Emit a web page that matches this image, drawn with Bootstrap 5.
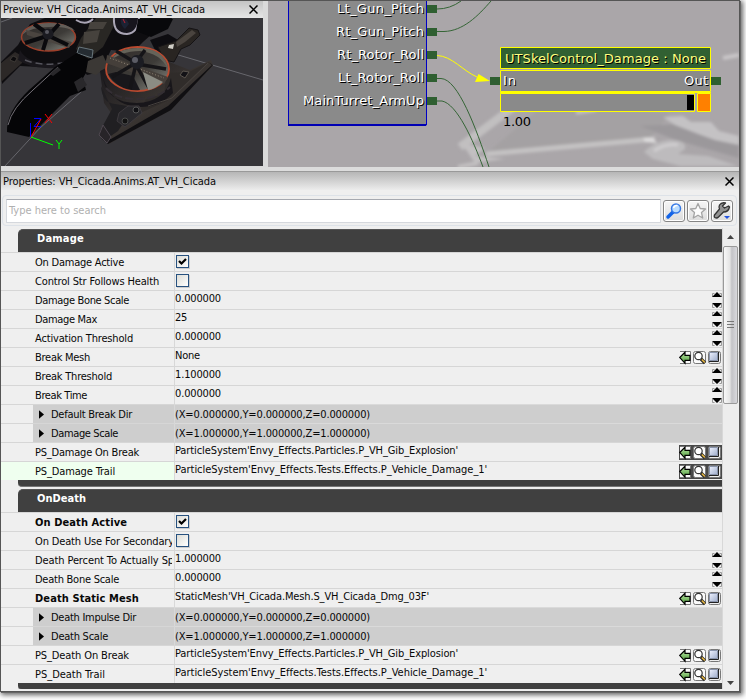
<!DOCTYPE html>
<html lang="en">
<head>
<meta charset="utf-8">
<title>AnimTree Editor</title>
<link href="https://cdn.jsdelivr.net/npm/bootstrap@5.3.0/dist/css/bootstrap.min.css" rel="stylesheet">
<script src="https://cdn.jsdelivr.net/npm/bootstrap@5.3.0/dist/js/bootstrap.bundle.min.js"></script>
<style>
body{background:#fff;font:11px/19px "DejaVu Sans Condensed","DejaVu Sans",sans-serif;color:#080808;overflow:hidden;height:700px}
.win{width:740px;height:692px;border:1px solid #555;background:#efefef;box-shadow:1px 1px 0 #666,2px 2px 5px 1px #666}
svg{display:block;flex:none}
.bar{height:17px;line-height:16px;background:linear-gradient(#c4c4c4,#e6e6e6);padding-left:2px}
.bar svg,.props-bar svg{margin-right:5px}
.upper{height:166px;background:#dadada}
.preview{width:262px;margin-right:5px}
.gap-strip{height:5px;background:#dcdcdc;border-bottom:1px solid #999}
.props-bar{height:18px;line-height:17px;background:linear-gradient(#b6b6b6,#ececec);padding-left:2px}
.searchbox{height:31px;margin:5px 2px 2px 1px;border:1px solid #dde2e8;border-radius:4px;padding:3px;gap:2px}
.searchbox .form-control{border-radius:1px;border:1px solid #d5d8dd;border-top-color:#a6a9b0;font-size:11px;line-height:18px;padding:2px 2px;height:24px;color:#b0b0b0;background:#fff;width:655px;flex:none}
.tool{width:22px;height:22px;border:1px solid #858585;border-radius:3px;background:linear-gradient(#f6f6f6,#dcdcdc);box-shadow:inset 0 0 0 1px #fff;margin-top:1px}
.list{width:721px;height:461px;padding-top:1px;overflow:hidden}
.cat{margin-left:17px;height:23px;background:#404040;color:#fff;font-weight:bold;border-radius:5px 0 0 0;padding-left:19px;line-height:18px;border-top:1px solid #555}
.foot{margin-left:17px;height:7px;background:#404040;border-radius:0 0 0 4px;border-bottom:1px solid #777;margin-bottom:2px}
.prop{height:19px}
.lab{width:174px;border-right:1px solid #d8d8d8;border-top:1px solid #d6d6d6;padding-left:34px;padding-top:1px;line-height:18px;white-space:nowrap;overflow:hidden;flex:none}
.lab .clip{display:block;width:137px;overflow:hidden}
.val{border-top:1px solid #d6d6d6;line-height:16px;white-space:nowrap}
.nested .lab{padding-left:32px;padding-top:0}
.nested .lab>div{background:#cecece;padding-left:6px;height:18px;gap:6px}
.nested .lab span{padding-top:1px}
.nested .val{background:#cecece;line-height:20px;border-color:#dadada}
.lab svg{margin-right:1px}
.focused .lab{background:#efffef}
.val>svg{margin-top:1px}
.val>svg[width="43"]{margin-top:2px}
.val>svg.inset-dark{background:#484848}
.chk{width:13px;height:13px;border:1px solid #27517f;background:linear-gradient(135deg,#dcdcd6,#fff);margin:2px 0 0 1px;box-shadow:1px 1px 0 #ccc}
.scroll{width:16px;background:#ededed;border-left:1px solid #d8d8d8;padding-top:7px}
.thumb{width:15px;height:158px;margin-top:7px;border:1px solid #999;border-radius:2px;background:linear-gradient(90deg,#f8f8f8,#e4e4e4 45%,#c3c3c7 60%,#d8d8dc);margin-bottom:277px}
.onpic{font-family:"DejaVu Sans",sans-serif;font-size:13px}
</style>
</head>
<body>
<svg width="0" height="0" class="position-absolute">
<defs>
<linearGradient id="gg" x1="0" y1="0" x2="0" y2="1"><stop offset="0" stop-color="#b9e6a4"/><stop offset="1" stop-color="#4d9a3a"/></linearGradient>
<linearGradient id="gb" x1="0" y1="0" x2="1" y2="1"><stop offset="0" stop-color="#eef2ff"/><stop offset="1" stop-color="#9fadcb"/></linearGradient>
<symbol id="spin" viewBox="0 0 10 17"><path d="M.5 5V1.500h2M9.500 5V1.500h-2M.5 12v3.500h2M9.500 12v3.500h-2" fill="none" stroke="#999"/><path d="M0 5L5 0l5 5zM0 11h10l-5 5z" fill="#000"/></symbol>
<symbol id="asset" viewBox="0 0 43 15">
<path d="M1 1.500h10.500v12H1" fill="#fafafa" stroke="#777"/><path d="M.7 7.500L6 2.300v3h5v5H6v3z" fill="url(#gg)" stroke="#000" stroke-width="1.200"/>
<rect x="14.500" y="1.500" width="12" height="12" rx="2" fill="#fafafa" stroke="#777"/><circle cx="19.500" cy="6" r="3.700" fill="#fff" stroke="#333" stroke-width="1.200"/><path d="M22 9l4 4" stroke="#222" stroke-width="3.200"/><path d="M22.800 9.500l3 3" stroke="#e8b840" stroke-width="1.600"/>
<rect x="29.500" y="1.500" width="12" height="12" rx="2" fill="#eee" stroke="#777"/><path d="M30.500 2.500h8v8h-8z" fill="url(#gb)" stroke="#8893ab"/><path d="M39.500 2v9.500H30" fill="none" stroke="#222"/></symbol>
<symbol id="tri" viewBox="0 0 6 10"><path d="M0 0l6 5-6 5z" fill="#000"/></symbol>
<symbol id="tick" viewBox="0 0 11 11"><path d="M2 5l2.500 2.500L9 3" fill="none" stroke="#000" stroke-width="2.200"/></symbol>
<symbol id="xx" viewBox="0 0 9 9"><path d="M.5.5l8 8M8.500.5l-8 8" stroke="#000" stroke-width="1.500"/></symbol>
</defs>
</svg>
<div class="win d-flex flex-column">
  <div class="upper d-flex flex-shrink-0">
    <section class="preview">
      <div class="bar d-flex justify-content-between align-items-center"><span data-w="202">Preview: VH_Cicada.Anims.AT_VH_Cicada</span><svg width="9" height="9"><use href="#xx"/></svg></div>
      <svg width="262" height="148" viewBox="1 18 262 148">
        <defs>
        <linearGradient id="hull" x1="0" y1="0" x2="1" y2="1"><stop offset="0" stop-color="#16151a"/><stop offset=".5" stop-color="#3a3532"/><stop offset="1" stop-color="#171519"/></linearGradient>
        <linearGradient id="duct" x1="0" y1="0" x2="1" y2="1"><stop offset="0" stop-color="#302b29"/><stop offset=".55" stop-color="#3d3b38"/><stop offset="1" stop-color="#8b8c84"/></linearGradient>
        </defs>
        <path fill="#363539" d="M1 18h262v148H1z"/>
        <path d="M1 22L12 18M175 54L263 80M5 166L40 128 82 91" stroke="#74747a" fill="none" stroke-width=".8"/>
        <path d="M1 62L18 45 30 24 45 18H172L169 26 152 34 143 42 133 52 111 50 100 72 87 75 74 60 60 68 20 66 2 84z" fill="#0e0d10"/>
        <path d="M1 63L15 52 24 57 22 63 1 82z" fill="#2c2827"/><path d="M10 60l3-4 4 2-2 4z" fill="#0c0b0d" stroke="#514b47" stroke-width=".6"/>
        <path d="M20 50q6 12 28 14t32-12l-2 11q-15 6-32 5-18-1-28-8z" fill="#19171c"/>
        <path d="M25 60q20 8 45 1" stroke="#55545c" fill="none" stroke-width="1.500" stroke-dasharray="7 4"/>
        <ellipse cx="48.500" cy="37" rx="27" ry="14" fill="url(#duct)" stroke="#9d3f2a" stroke-width="1.500"/>
        <path d="M22 35Q28 23 50 23q18 0 25 8-13-5-26-4-18 0-27 8z" fill="#615d58"/>
        <path d="M26 30l46 12-3 6-42-13z" fill="#4b4540"/><path d="M48 34L34 24M49 35l10-11M49 36l19 9M47 37l-4 13M47 36L25 43" stroke="#0a0a0d" stroke-width="4"/>
        <circle cx="48" cy="34" r="5.500" fill="#1a1a20"/><circle cx="47" cy="32" r="2" fill="#57575f"/>
        <path d="M81 38L96 18h22L103 47 88 59 76 49z" fill="#292724"/><path d="M84 32l16-2-3 12-14 2zM90 22h17l-4 7H88z" fill="#46423d"/><path d="M79 47l14 3-1 8-15-5z" fill="#252c32" stroke="#68757c"/>
        <path d="M76 20q10 6 17-1M114 18q-1 16 13 16 11-1 12-16" fill="#17151d" stroke="#aaa5b5" stroke-width="2"/>
        <path d="M121 19q5-2 8 5l-4 5q-5-4-4-10z" fill="#1c2233"/><path d="M123 19l2 4" stroke="#c21e31"/>
        <path d="M138 19h35l-5 10-17 8-15-6z" fill="#08080b"/>
        <path d="M77 53L93 61 83 78 86 90 70 96 29 137 7 132Q6 112 29 90L55 67z" fill="#050507"/>
        <path d="M8 125Q12 108 33 90L58 67" stroke="#747077" fill="none"/><path d="M50 74l8-7 3 3-8 6zM74 82l8-5 5 8-9 7z" fill="#29282b"/>
        <path d="M88 61l15-6 5 11-12 9-10-3z" fill="#3b3835"/>
        <path d="M150 40l18-6 10 6-8 14-14-2z" fill="#0d0c10"/>
        <path d="M158 47l18-6 13-13 9 2 2 5-10 10-9 4-7 13-10-2z" fill="#292522" stroke="#151315"/><path d="M176 42l16-12 4 3-11 9-8 5z" fill="#4a443f"/><path d="M169 45l5-1-1 5-5-1z" fill="#d0cec6"/>
        <path d="M100 71L110 66 169 62 190 70 211 60 213 66 171 110 109 144 99 135 111 113 104 103z" fill="url(#hull)"/>
        <path d="M208 62l4 3-44 41-57 33-11-5 2 5 6 5 63-34 42-45z" fill="#100f12"/><path d="M167 73l22-1 20-10-42 39-29 13 8-15 18-5z" fill="#302c2a"/>
        <path d="M101 86Q102 103 115 104l19 3-16 24-10 7-8-7 12-22z" fill="#201f22"/>
        <path d="M103 78q4 25 34 25 28-1 34-25l2 15q-14 15-36 14-25-2-34-29z" fill="#18161a"/>
        <path d="M106 88q10 11 31 11 20 0 33-12" stroke="#332e33" fill="none" stroke-width="2" stroke-dasharray="8 3"/>
        <ellipse cx="137.500" cy="69" rx="31.500" ry="22" fill="url(#duct)" stroke="#b94a30" stroke-width="1.800"/>
        <path d="M108 63Q117 48 138 48q27 0 30 21-8-16-28-18-20 0-32 12z" fill="#656359"/><path d="M108 74q11 18 32 16l-7-14-17-4z" fill="#18171b"/>
        <path d="M107 55l61 22-4 7-58-21z" fill="#453f3a"/><path d="M110 58l54 20" stroke="#8e8374" stroke-dasharray="1 2"/>
        <path d="M136 63L116 51M137 61l8-11M137 64l29 5M136 64l-6 25M136 65l13 23M134 64l-22 13" stroke="#151417" stroke-width="3.500"/>
        <path d="M143 72l20 10q-8 7-15 8z" fill="#8b8c84"/><circle cx="137" cy="62" r="7" fill="#1b1c22"/><circle cx="135" cy="60" r="3" fill="#5b5c65"/>
        <path d="M119 113l9-7h11l3 7-17 14-8-6z" fill="#29282c" stroke="#3d393d"/><circle cx="136" cy="110" r="3" fill="#101014" stroke="#555"/><circle cx="125" cy="121" r="3" fill="#111" stroke="#4a4a4a"/>
        <path d="M103 125l-4 10 8 8 4-6z" fill="#272428" stroke="#4f4850"/>
        <path d="M183 71l6 1-4 6-5-3z" fill="#131216" stroke="#5b554e"/><path d="M148 106l24-8 36-35" stroke="#46413e" fill="none"/>
        <path d="M30.500 137V123M34 118.500h7l-7 8h7" stroke="#0000ff" fill="none"/><path d="M31 137l10-18M45 114l7 9M52 114l-7 9" stroke="#f00" fill="none"/><path d="M31 137l22 8M56 140l3 4 3-4M59 144v5" stroke="#0f0" fill="none"/>
      </svg>
    </section>
    <svg width="471" height="166" viewBox="268 1 471 166" class="onpic">
      <defs><filter id="soft" x="-10%" y="-10%" width="120%" height="120%"><feGaussianBlur stdDeviation="1.500"/></filter></defs>
      <path fill="#aaa6a9" d="M268 1h471v166H268z"/>
      <g filter="url(#soft)">
        <path d="M486 154L540 108l60-4 70 10-20 24z" fill="#a4a1a3"/>
        <path d="M486 154L655 139" stroke="#c4c2c3" stroke-width="5"/><path d="M460 147l56-42" stroke="#c1bfc0" stroke-width="8"/>
        <path d="M460 143l25 5-10 8 30 3-30 4-8-12z" fill="#c2c0c1"/><path d="M458 167l20-4" stroke="#c2c0c1" stroke-width="4"/>
        <path d="M640 126l40-2 59 20v14l-63-18z" fill="#9b989b"/>
        <path d="M663 117l20-1 8 6 20 0 8 9 20 5v9l-24-5-14-5-26-10z" fill="#c4c2c4"/>
        <path d="M644 152q10-10 25-12 18 0 16 9l-7 5 30 2 30 10h-58l-27-7z" fill="#bdbbbd"/>
        <path d="M654 151q12-8 24-6" stroke="#d0ced0" stroke-width="3" fill="none"/>
        <path d="M643 138l10 0 4 5-12-1z" fill="#dddbdc"/><path d="M723 58l16-3" stroke="#c9c6c8" stroke-width="4"/><path d="M576 113l20-3" stroke="#c6c3c5" stroke-width="3"/>
      </g>
      <path d="M288.500 0V125H426.500V0" fill="#8a8a8a" stroke="#0000c4"/><path d="M288 125h138" stroke="#0000b4" stroke-width="2"/>
      <g fill="none" stroke="#356536">
        <path d="M437 9Q450 9 461 1M437 31.500h7C463 31 478 16 491 1M437 78.500h4C458 79 476 128 489 167M437 101h5C457 104 473 140 483 167"/>
        <path d="M437 55.500C452 56 463 71 477 77" stroke="#ff0"/>
      </g>
      <path d="M478.500 74L490 81 475 82z" fill="#ff0"/>
      <path fill="#2f5f31" d="M427 5h10v8h-10zM427 28h10v8h-10zM427 51h10v8h-10zM427 74h10v8h-10zM427 97h10v8h-10zM490 77h10v8h-10zM711 77h10v8h-10z"/>
      <g text-anchor="end" fill="#fff" style="text-shadow:1px 1px 0 #000">
        <text x="424" y="13" textLength="87">Lt_Gun_Pitch</text><text x="424" y="36" textLength="88">Rt_Gun_Pitch</text><text x="424" y="59" textLength="87">Rt_Rotor_Roll</text><text x="424" y="82" textLength="86">Lt_Rotor_Roll</text><text x="424" y="105" textLength="121">MainTurret_ArmUp</text>
      </g>
      <path d="M500.500 47.500h210v21h-210z" fill="#316032" stroke="#ff0"/>
      <path d="M500.500 70.500h210v21h-210z" fill="#8a8a8a" stroke="#ff0"/><path d="M500.500 93.500h194v18h-194z" fill="#8a8a8a" stroke="#ff0"/>
      <path d="M697.500 93.500h13v18h-13z" fill="#ff8000" stroke="#ff0"/><path d="M500 92.500h211" stroke="#ff0"/><path d="M687 95h7v15h-7z"/>
      <g style="text-shadow:1px 1px 0 #000"><text x="505" y="63" textLength="201" fill="#ffff80">UTSkelControl_Damage : None</text><text x="503" y="85" textLength="13" fill="#fff">In</text><text x="684" y="85" textLength="24" fill="#fff">Out</text></g>
      <text x="503" y="126" textLength="28">1.00</text>
    </svg>
  </div>
  <div class="gap-strip flex-shrink-0"></div>
  <div class="props-bar d-flex justify-content-between align-items-center flex-shrink-0"><span data-w="213">Properties: VH_Cicada.Anims.AT_VH_Cicada</span><svg width="9" height="9"><use href="#xx"/></svg></div>
  <div class="searchbox d-flex flex-shrink-0">
    <div class="form-control"><span data-w="97">Type here to search</span></div>
    <div class="tool"><svg width="20" height="20"><path d="M4 16l5-5" stroke="#1263e8" stroke-width="3.500" stroke-linecap="round"/><circle cx="12" cy="7.500" r="4.500" fill="#b9dcff" stroke="#3578e5" stroke-width="1.500"/><path d="M9.500 7q1-3 4-2.500" stroke="#fff" fill="none" stroke-width="1.500"/></svg></div>
    <div class="tool"><svg width="20" height="20"><path d="M10 2.500l2.200 5 5.300.5-4 3.600 1.200 5.400-4.700-2.800L5.300 17l1.200-5.400-4-3.600 5.300-.5z" fill="#fcfcfc" stroke="#a4a4a4" stroke-width="1.300" stroke-linejoin="round"/></svg></div>
    <div class="tool"><svg width="20" height="20"><path d="M16.500 5l-4 2-2-2 3-3q-4-1-6 2-1 2 0 4l-5 6q-1 3 2 3 1 0 2-1l5-5q5 0 6-5z" fill="#929292" stroke="#333" stroke-width="1.300" stroke-linejoin="round"/><path d="M12 15h6l-3 3z" fill="#2152df"/></svg></div>
  </div>
  <div class="d-flex">
    <main class="list">
      <div class="cat"><span data-w="47">Damage</span></div>
      <div class="prop d-flex"><div class="lab"><span data-w="89">On Damage Active</span></div><div class="val flex-fill"><div class="chk"><svg width="11" height="11"><use href="#tick"/></svg></div></div></div>
      <div class="prop d-flex"><div class="lab"><span data-w="124">Control Str Follows Health</span></div><div class="val flex-fill"><div class="chk"></div></div></div>
      <div class="prop d-flex"><div class="lab"><span data-w="94">Damage Bone Scale</span></div><div class="val flex-fill d-flex justify-content-between"><span data-w="46">0.000000</span><svg width="10" height="17"><use href="#spin"/></svg></div></div>
      <div class="prop d-flex"><div class="lab"><span data-w="62">Damage Max</span></div><div class="val flex-fill d-flex justify-content-between"><span data-w="12">25</span><svg width="10" height="17"><use href="#spin"/></svg></div></div>
      <div class="prop d-flex"><div class="lab"><span data-w="98">Activation Threshold</span></div><div class="val flex-fill d-flex justify-content-between"><span data-w="46">0.000000</span><svg width="10" height="17"><use href="#spin"/></svg></div></div>
      <div class="prop d-flex"><div class="lab"><span data-w="55">Break Mesh</span></div><div class="val flex-fill d-flex justify-content-between"><span data-w="25">None</span><svg width="43" height="15"><use href="#asset"/></svg></div></div>
      <div class="prop d-flex"><div class="lab"><span data-w="77">Break Threshold</span></div><div class="val flex-fill d-flex justify-content-between"><span data-w="46">1.100000</span><svg width="10" height="17"><use href="#spin"/></svg></div></div>
      <div class="prop d-flex"><div class="lab"><span data-w="52">Break Time</span></div><div class="val flex-fill d-flex justify-content-between"><span data-w="46">0.000000</span><svg width="10" height="17"><use href="#spin"/></svg></div></div>
      <div class="prop nested d-flex"><div class="lab"><div class="d-flex align-items-center"><svg width="5" height="9"><use href="#tri"/></svg><span data-w="81">Default Break Dir</span></div></div><div class="val flex-fill"><span data-w="195">(X=0.000000,Y=0.000000,Z=0.000000)</span></div></div>
      <div class="prop nested d-flex"><div class="lab"><div class="d-flex align-items-center"><svg width="5" height="9"><use href="#tri"/></svg><span data-w="67">Damage Scale</span></div></div><div class="val flex-fill"><span data-w="195">(X=1.000000,Y=1.000000,Z=1.000000)</span></div></div>
      <div class="prop d-flex"><div class="lab"><span data-w="104">PS_Damage On Break</span></div><div class="val flex-fill d-flex justify-content-between"><span data-w="283">ParticleSystem'Envy_Effects.Particles.P_VH_Gib_Explosion'</span><svg width="43" height="15" class="inset-dark"><use href="#asset"/></svg></div></div>
      <div class="prop focused d-flex"><div class="lab"><span data-w="80">PS_Damage Trail</span></div><div class="val flex-fill d-flex justify-content-between"><span data-w="312">ParticleSystem'Envy_Effects.Tests.Effects.P_Vehicle_Damage_1'</span><svg width="43" height="15" class="inset-dark"><use href="#asset"/></svg></div></div>
      <div class="foot"></div>
      <div class="cat"><span data-w="49">OnDeath</span></div>
      <div class="prop d-flex"><div class="lab fw-bold"><span data-w="92">On Death Active</span></div><div class="val flex-fill"><div class="chk"><svg width="11" height="11"><use href="#tick"/></svg></div></div></div>
      <div class="prop d-flex"><div class="lab"><span class="clip" data-w="139">On Death Use For Secondary</span></div><div class="val flex-fill"><div class="chk"></div></div></div>
      <div class="prop d-flex"><div class="lab"><span class="clip" data-w="139">Death Percent To Actually Sp</span></div><div class="val flex-fill d-flex justify-content-between"><span data-w="46">1.000000</span><svg width="10" height="17"><use href="#spin"/></svg></div></div>
      <div class="prop d-flex"><div class="lab"><span data-w="84">Death Bone Scale</span></div><div class="val flex-fill d-flex justify-content-between"><span data-w="46">0.000000</span><svg width="10" height="17"><use href="#spin"/></svg></div></div>
      <div class="prop d-flex"><div class="lab fw-bold"><span data-w="104">Death Static Mesh</span></div><div class="val flex-fill d-flex justify-content-between"><span data-w="254">StaticMesh'VH_Cicada.Mesh.S_VH_Cicada_Dmg_03F'</span><svg width="43" height="15"><use href="#asset"/></svg></div></div>
      <div class="prop nested d-flex"><div class="lab"><div class="d-flex align-items-center"><svg width="5" height="9"><use href="#tri"/></svg><span data-w="85">Death Impulse Dir</span></div></div><div class="val flex-fill"><span data-w="195">(X=0.000000,Y=0.000000,Z=0.000000)</span></div></div>
      <div class="prop nested d-flex"><div class="lab"><div class="d-flex align-items-center"><svg width="5" height="9"><use href="#tri"/></svg><span data-w="57">Death Scale</span></div></div><div class="val flex-fill"><span data-w="195">(X=1.000000,Y=1.000000,Z=1.000000)</span></div></div>
      <div class="prop d-flex"><div class="lab"><span data-w="94">PS_Death On Break</span></div><div class="val flex-fill d-flex justify-content-between"><span data-w="283">ParticleSystem'Envy_Effects.Particles.P_VH_Gib_Explosion'</span><svg width="43" height="15"><use href="#asset"/></svg></div></div>
      <div class="prop d-flex"><div class="lab"><span data-w="70">PS_Death Trail</span></div><div class="val flex-fill d-flex justify-content-between"><span data-w="312">ParticleSystem'Envy_Effects.Tests.Effects.P_Vehicle_Damage_1'</span><svg width="43" height="15"><use href="#asset"/></svg></div></div>
      <div class="foot"></div>
    </main>
    <aside class="scroll d-flex flex-column align-items-center">
      <svg width="7" height="4"><path d="M0 4l3.500-4L7 4z" fill="#444"/></svg>
      <div class="thumb d-flex align-items-center justify-content-center flex-shrink-0"><svg width="7" height="8"><path d="M0 .5h7M0 3.500h7M0 6.500h7" stroke="#777"/></svg></div>
      <svg width="7" height="4"><path d="M0 0l3.500 4L7 0z" fill="#444"/></svg>
    </aside>
  </div>
</div>
<script>
document.querySelectorAll('[data-w]').forEach(function (el) {
  var r = document.createRange();
  r.selectNodeContents(el);
  var natural = r.getBoundingClientRect().width;
  el.style.letterSpacing = ((el.dataset.w - natural) / el.textContent.length) + 'px';
});
</script>
</body>
</html>
